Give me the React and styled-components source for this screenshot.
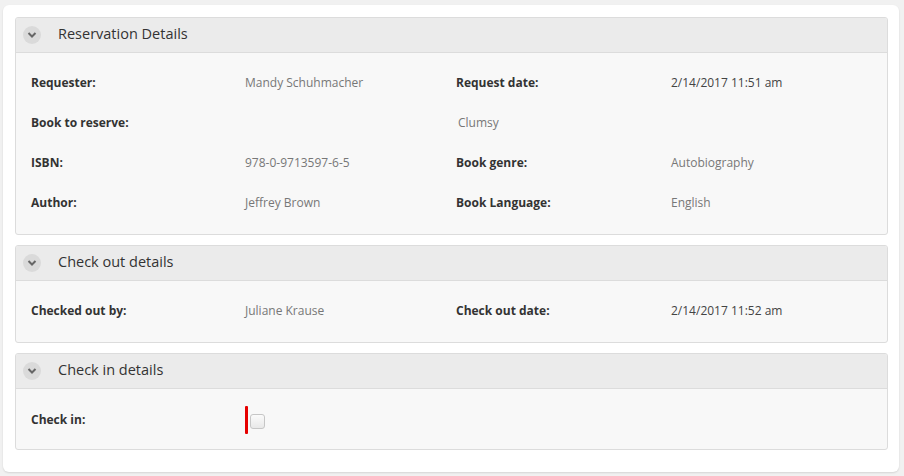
import React from 'react';
import styled, { createGlobalStyle } from 'styled-components';

const GlobalStyle = createGlobalStyle`
  html, body {
    margin: 0;
    padding: 0;
    background: #f1f1f1;
    font-family: 'Open Sans', 'Liberation Sans', sans-serif;
  }
`;

const Page = styled.div`
  padding: 5px 5px 4px 3px;
`;

const Card = styled.div`
  background: #fff;
  border-radius: 6px;
  box-shadow: 0 1px 2px rgba(0, 0, 0, 0.12);
  padding: 12px 11px 22px 12px;
  display: flex;
  flex-direction: column;
  gap: 10px;
`;

const Panel = styled.section`
  border: 1px solid #dcdcdc;
  border-radius: 3px;
  background: #f8f8f8;
  overflow: hidden;
`;

const PanelHeader = styled.div`
  height: 34px;
  background: #ebebeb;
  border-bottom: 1px solid #dcdcdc;
  display: flex;
  align-items: center;
  padding-left: 7px;
  gap: 17px;
`;

const Toggle = styled.span`
  width: 18px;
  height: 18px;
  border-radius: 50%;
  background: #dadada;
  display: flex;
  align-items: center;
  justify-content: center;
`;

const Title = styled.h3`
  margin: 0 0 3px;
  font-size: 14.5px;
  font-weight: 400;
  color: #333;
`;

const Body = styled.div`
  padding: ${(p) => p.$pad || '21px 0 22px 15px'};
  display: grid;
  grid-template-columns: 214px 211px 215px 1fr;
  row-gap: 22px;
  align-items: center;
`;

const Label = styled.div`
  font-size: 12px;
  font-weight: 700;
  color: #333;
  line-height: 18px;
`;

const Value = styled.div`
  font-size: 12px;
  color: ${(p) => (p.$dark ? '#444' : '#777')};
  line-height: 18px;
  padding-left: ${(p) => p.$indent || 0}px;
  grid-column: ${(p) => p.$span || 'auto'};
`;

const CheckWrap = styled.div`
  display: flex;
  align-items: center;
  gap: 2px;
`;

const RequiredBar = styled.span`
  width: 3px;
  height: 28px;
  background: #e60000;
  border-radius: 1px;
`;

const Check = styled.span`
  width: 13px;
  height: 13px;
  border: 1px solid #c6c6c6;
  border-radius: 3px;
  background: linear-gradient(#fbfbfb, #e8e8e8);
  margin-top: 2px;
`;

function Chevron() {
  return (
    <Toggle>
      <svg width="10" height="8" viewBox="0 0 10 8">
        <path d="M1.5 2 L5 5.5 L8.5 2" fill="none" stroke="#666" strokeWidth="2" />
      </svg>
    </Toggle>
  );
}

function Section({ title, children }) {
  return (
    <Panel>
      <PanelHeader>
        <Chevron />
        <Title>{title}</Title>
      </PanelHeader>
      {children}
    </Panel>
  );
}

export default function App() {
  return (
    <Page>
      <GlobalStyle />
      <Card>
        <Section title="Reservation Details">
          <Body>
            <Label>Requester:</Label>
            <Value>Mandy Schuhmacher</Value>
            <Label>Request date:</Label>
            <Value $dark>2/14/2017 11:51 am</Value>

            <Label>Book to reserve:</Label>
            <Value />
            <Value $indent={2} $span="span 2">Clumsy</Value>

            <Label>ISBN:</Label>
            <Value>978-0-9713597-6-5</Value>
            <Label>Book genre:</Label>
            <Value>Autobiography</Value>

            <Label>Author:</Label>
            <Value>Jeffrey Brown</Value>
            <Label>Book Language:</Label>
            <Value>English</Value>
          </Body>
        </Section>

        <Section title="Check out details">
          <Body $pad="21px 0 22px 15px">
            <Label>Checked out by:</Label>
            <Value>Juliane Krause</Value>
            <Label>Check out date:</Label>
            <Value $dark>2/14/2017 11:52 am</Value>
          </Body>
        </Section>

        <Section title="Check in details">
          <Body $pad="17px 0 15px 15px">
            <Label>Check in:</Label>
            <CheckWrap>
              <RequiredBar />
              <Check />
            </CheckWrap>
          </Body>
        </Section>
      </Card>
    </Page>
  );
}
